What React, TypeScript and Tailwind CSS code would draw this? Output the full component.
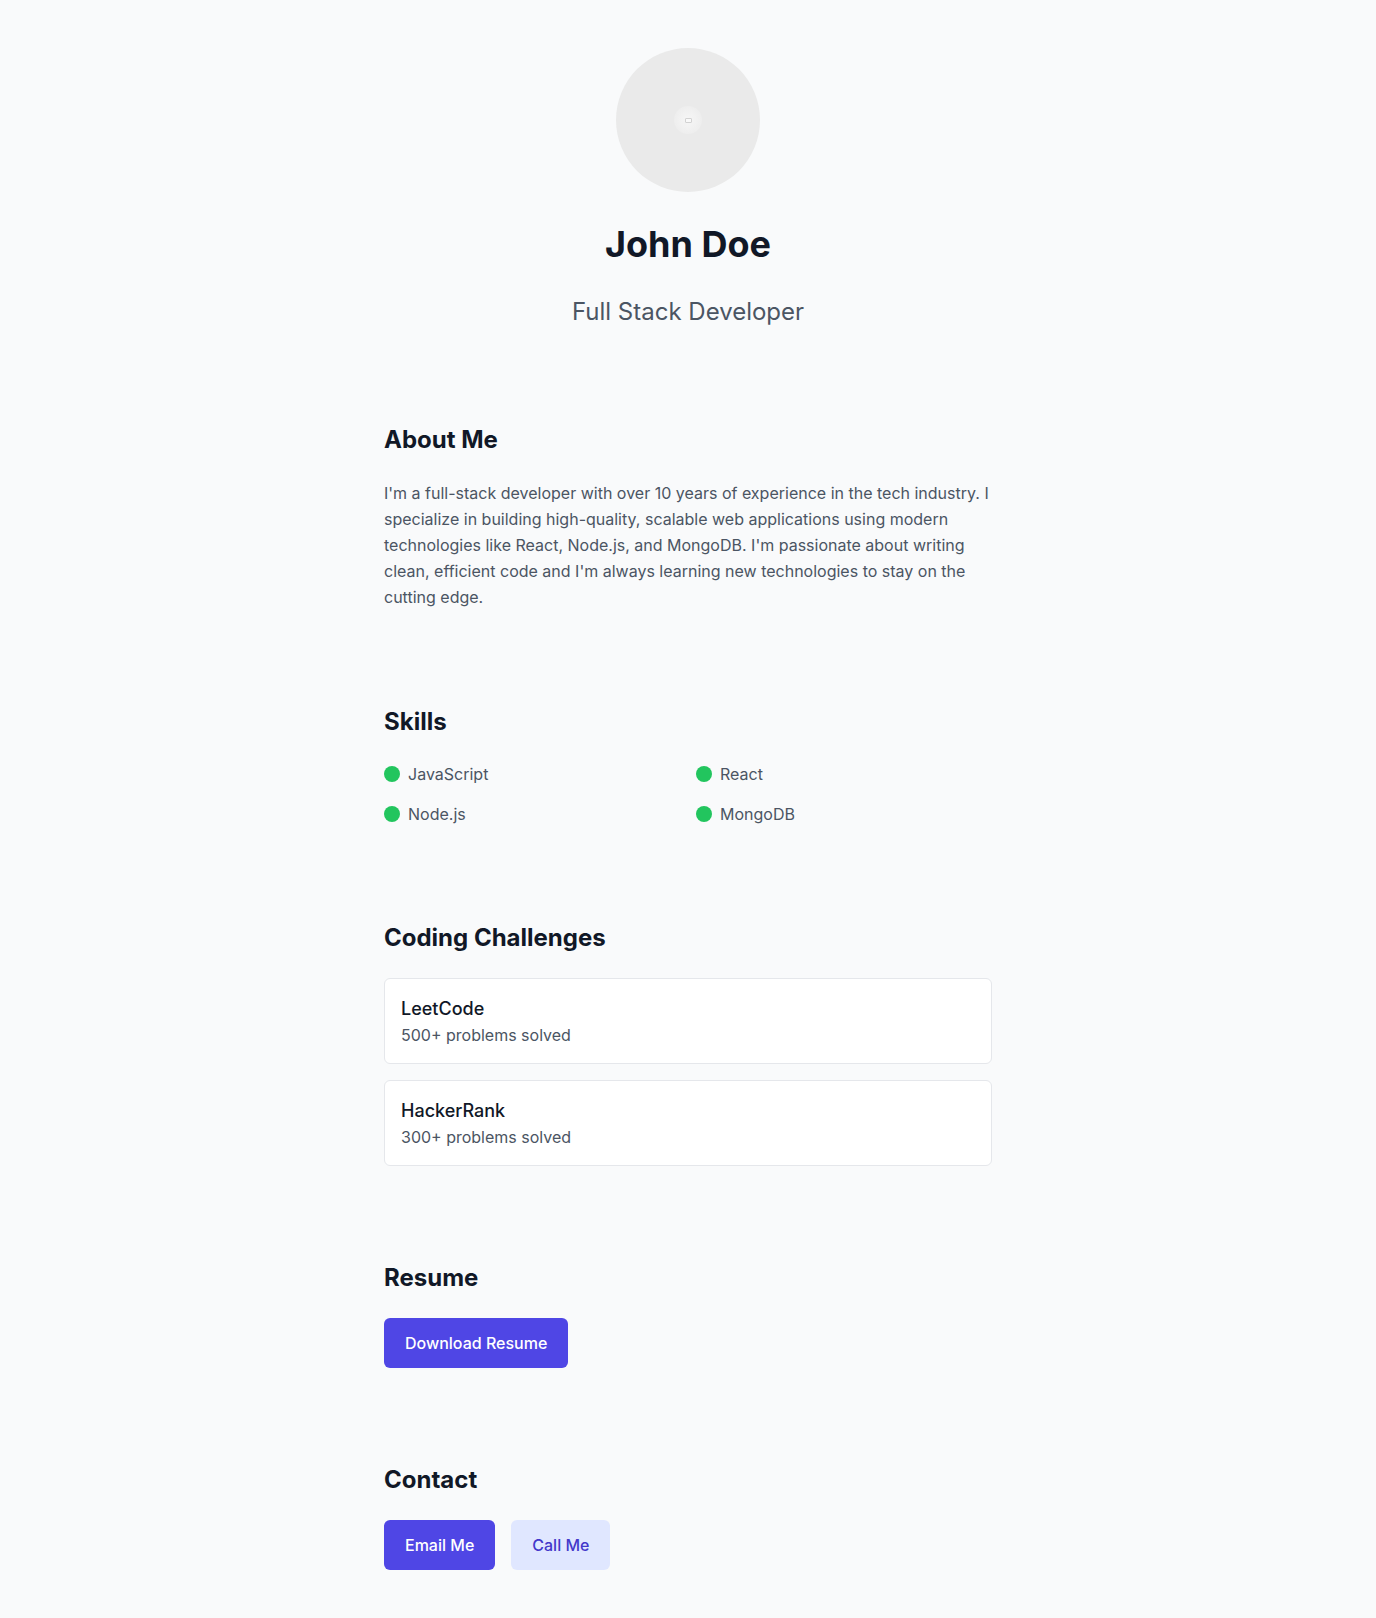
import React from "react";

export default function App() {
  const skills = ["JavaScript", "React", "Node.js", "MongoDB"];
  const challenges = [
    { name: "LeetCode", detail: "500+ problems solved" },
    { name: "HackerRank", detail: "300+ problems solved" },
  ];
  return (
    <div
      className="min-h-screen bg-[#f9fafb] text-[#111827]"
      style={{ fontFamily: "Inter, 'Noto Sans', sans-serif" }}
    >
      <div className="mx-auto max-w-2xl px-8">
        <header className="flex flex-col items-center py-12">
          <div className="flex h-36 w-36 items-center justify-center rounded-full bg-[#eaeaea]">
            <div className="flex h-7 w-7 items-center justify-center rounded-full bg-[radial-gradient(circle,#f6f6f6_0%,#f1f1f1_45%,#eaeaea_100%)]">
              <div className="h-[5px] w-[7px] rounded-[1px] border border-[#d2d2d2] bg-[#f9f9f9]" />
            </div>
          </div>
          <h1 className="mt-8 text-4xl font-bold text-[#111827]">John Doe</h1>
          <p className="mt-8 text-2xl text-[#4b5563]">Full Stack Developer</p>
        </header>

        <section className="py-12">
          <h2 className="mb-6 text-2xl font-bold text-[#111827]">About Me</h2>
          <p className="text-base leading-relaxed text-[#4b5563]">
            I'm a full-stack developer with over 10 years of experience in the tech industry. I
            specialize in building high-quality, scalable web applications using modern
            technologies like React, Node.js, and MongoDB. I'm passionate about writing clean,
            efficient code and I'm always learning new technologies to stay on the cutting edge.
          </p>
        </section>

        <section className="py-12">
          <h2 className="mb-6 text-2xl font-bold text-[#111827]">Skills</h2>
          <div className="grid grid-cols-2 gap-4">
            {skills.map((s) => (
              <div key={s} className="flex items-center gap-2">
                <span className="h-4 w-4 rounded-full bg-[#22c55e]" />
                <span className="text-base text-[#4b5563]">{s}</span>
              </div>
            ))}
          </div>
        </section>

        <section className="py-12">
          <h2 className="mb-6 text-2xl font-bold text-[#111827]">Coding Challenges</h2>
          <div className="flex flex-col gap-4">
            {challenges.map((c) => (
              <div key={c.name} className="rounded-md border border-[#e5e7eb] bg-white p-4">
                <div className="text-lg font-medium text-[#111827]">{c.name}</div>
                <div className="text-base text-[#4b5563]">{c.detail}</div>
              </div>
            ))}
          </div>
        </section>

        <section className="py-12">
          <h2 className="mb-6 text-2xl font-bold text-[#111827]">Resume</h2>
          <button className="rounded-md border border-transparent bg-[#4f46e5] px-5 py-3 text-base font-medium text-white">
            Download Resume
          </button>
        </section>

        <section className="py-12">
          <h2 className="mb-6 text-2xl font-bold text-[#111827]">Contact</h2>
          <div className="flex gap-4">
            <button className="rounded-md border border-transparent bg-[#4f46e5] px-5 py-3 text-base font-medium text-white">
              Email Me
            </button>
            <button className="rounded-md border border-transparent bg-[#e0e7ff] px-5 py-3 text-base font-medium text-[#4338ca]">
              Call Me
            </button>
          </div>
        </section>
      </div>
    </div>
  );
}
